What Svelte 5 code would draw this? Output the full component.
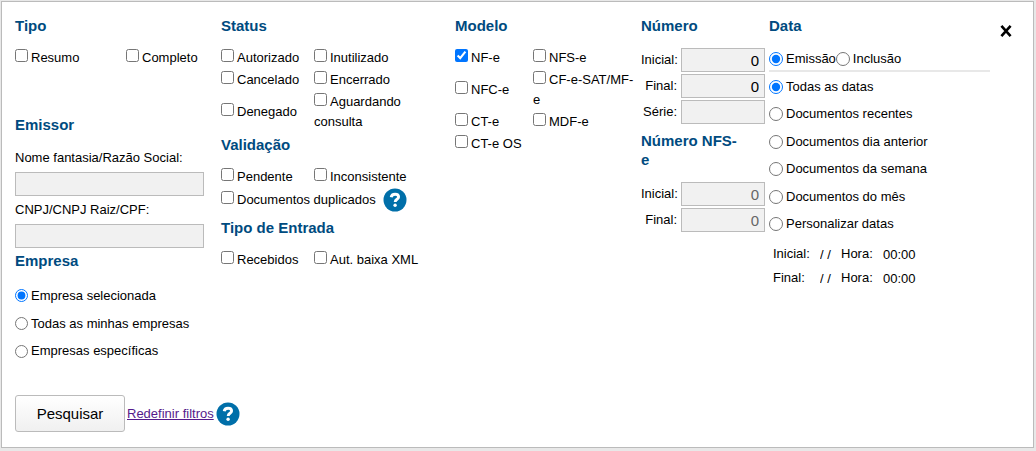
<script lang="ts">
	type Option = { id: string; label: string; checked?: boolean };

	const tipo: Option[] = [
		{ id: 'resumo', label: 'Resumo' },
		{ id: 'completo', label: 'Completo' }
	];

	const status: Option[] = [
		{ id: 'autorizado', label: 'Autorizado' },
		{ id: 'inutilizado', label: 'Inutilizado' },
		{ id: 'cancelado', label: 'Cancelado' },
		{ id: 'encerrado', label: 'Encerrado' },
		{ id: 'denegado', label: 'Denegado' },
		{ id: 'aguardando', label: 'Aguardando consulta' }
	];

	const validacao: Option[] = [
		{ id: 'pendente', label: 'Pendente' },
		{ id: 'inconsistente', label: 'Inconsistente' }
	];

	const entrada: Option[] = [
		{ id: 'recebidos', label: 'Recebidos' },
		{ id: 'baixa-xml', label: 'Aut. baixa XML' }
	];

	const modelo: Option[] = [
		{ id: 'nfe', label: 'NF-e', checked: true },
		{ id: 'nfse', label: 'NFS-e' },
		{ id: 'nfce', label: 'NFC-e' },
		{ id: 'cfe', label: 'CF-e-SAT/MF-e' },
		{ id: 'cte', label: 'CT-e' },
		{ id: 'mdfe', label: 'MDF-e' },
		{ id: 'cteos', label: 'CT-e OS' }
	];

	const empresas = ['Empresa selecionada', 'Todas as minhas empresas', 'Empresas específicas'];
	const tiposData = ['Emissão', 'Inclusão'];
	const periodos = [
		'Todas as datas',
		'Documentos recentes',
		'Documentos dia anterior',
		'Documentos da semana',
		'Documentos do mês',
		'Personalizar datas'
	];

	let empresa = $state(empresas[0]);
	let tipoData = $state(tiposData[0]);
	let periodo = $state(periodos[0]);
	let aberto = $state(true);
</script>

{#snippet checks(items: Option[])}
	{#each items as item (item.id)}
		<label class="check"><input type="checkbox" name={item.id} checked={item.checked} />{item.label}</label>
	{/each}
{/snippet}

{#snippet help()}
	<button type="button" class="help" aria-label="Ajuda">
		<svg viewBox="0 0 24 24" width="24" height="24">
			<circle cx="12" cy="12" r="11.5" fill="#006fa9" />
			<path d="M8.2 9.3C8.5 7 10 6.2 12.1 6.2c2.2 0 3.5 1.1 3.5 2.8 0 2.3-3.4 2.3-3.4 4.9" fill="none" stroke="#fff" stroke-width="2.9" />
			<circle cx="12.1" cy="17.2" r="1.7" fill="#fff" />
		</svg>
	</button>
{/snippet}

{#if aberto}
	<form class="panel" onsubmit={(e) => e.preventDefault()}>
		<div class="columns">
			<div>
				<h2>Tipo</h2>
				<div class="checks tipo">{@render checks(tipo)}</div>

				<h2>Emissor</h2>
				<div class="fields">
					<label for="nome">Nome fantasia/Razão Social:</label>
					<input id="nome" class="box" type="text" />
					<label for="cnpj">CNPJ/CNPJ Raiz/CPF:</label>
					<input id="cnpj" class="box" type="text" />
				</div>

				<h2>Empresa</h2>
				<div class="radios empresas">
					{#each empresas as item}
						<label><input type="radio" name="empresa" value={item} bind:group={empresa} />{item}</label>
					{/each}
				</div>
			</div>

			<div>
				<h2>Status</h2>
				<div class="checks status">{@render checks(status)}</div>

				<h2>Validação</h2>
				<div class="checks status">{@render checks(validacao)}</div>
				<div class="duplicados">
					<label class="check"><input type="checkbox" name="duplicados" />Documentos duplicados</label>
					{@render help()}
				</div>

				<h2>Tipo de Entrada</h2>
				<div class="checks status">{@render checks(entrada)}</div>
			</div>

			<div>
				<h2>Modelo</h2>
				<div class="checks modelo">{@render checks(modelo)}</div>
			</div>

			<div>
				<h2>Número</h2>
				<div class="numbers">
					<label for="num-inicial">Inicial:</label>
					<input id="num-inicial" class="box" type="text" value="0" />
					<label for="num-final">Final:</label>
					<input id="num-final" class="box" type="text" value="0" />
					<label for="serie">Série:</label>
					<input id="serie" class="box" type="text" />
				</div>

				<h2 class="nfse">Número NFS-e</h2>
				<div class="numbers">
					<label for="nfse-inicial">Inicial:</label>
					<input id="nfse-inicial" class="box" type="text" value="0" disabled />
					<label for="nfse-final">Final:</label>
					<input id="nfse-final" class="box" type="text" value="0" disabled />
				</div>
			</div>

			<div class="data">
				<h2>Data</h2>
				<div class="tipo-data">
					{#each tiposData as item}
						<label><input type="radio" name="tipo-data" value={item} bind:group={tipoData} />{item}</label>
					{/each}
				</div>
				<div class="radios periodos">
					{#each periodos as item}
						<label><input type="radio" name="periodo" value={item} bind:group={periodo} />{item}</label>
					{/each}
				</div>
				<div class="intervalo">
					<label for="data-inicial">Inicial:</label>
					<input id="data-inicial" type="text" value="/ /" />
					<label for="hora-inicial">Hora:</label>
					<input id="hora-inicial" type="text" value="00:00" />
					<label for="data-final">Final:</label>
					<input id="data-final" type="text" value="/ /" />
					<label for="hora-final">Hora:</label>
					<input id="hora-final" type="text" value="00:00" />
				</div>
			</div>

			<button type="button" class="close" aria-label="Fechar" onclick={() => (aberto = false)}>
				<svg viewBox="0 0 12 12" width="12" height="12">
					<path d="M1.4 0.9L10.6 11.1M10.6 0.9L1.4 11.1" fill="none" stroke="#000" stroke-width="2.6" />
				</svg>
			</button>
		</div>

		<div class="actions">
			<button type="submit" class="search">Pesquisar</button>
			<a href="#redefinir">Redefinir filtros</a>
			{@render help()}
		</div>
	</form>
{/if}

<style>
	:global(body) {
		margin: 0;
		background: #e8e8e8;
		color: #000;
		font: 13px/20px 'Liberation Sans', Arial, sans-serif;
	}

	.panel {
		margin: 1px 2px 3px 1px;
		padding: 14px 12px 15px 13px;
		background: #fff;
		border: 1px solid #bbb;
	}

	.columns {
		display: grid;
		grid-template-columns: 206fr 234fr 186fr 128fr 221fr 31px;
		align-items: start;
	}

	h2 {
		margin: 0 0 12px;
		color: #004b80;
		font-size: 15px;
		line-height: 19px;
	}

	input {
		box-sizing: border-box;
		margin: 0;
		font-family: inherit;
	}

	input[type='checkbox'] {
		width: 13px;
		height: 13px;
		margin: 0 3px 2px 0;
	}

	input[type='radio'] {
		flex: none;
		width: 13px;
		height: 13px;
		margin-right: 3px;
	}

	.checks {
		display: grid;
		align-items: center;
		margin-bottom: 2px;
	}

	.check {
		padding: 1px 0;
	}

	.tipo {
		grid-template-columns: 111px 1fr;
		margin-bottom: 46px;
	}

	.status {
		grid-template-columns: 93px 110px;
	}

	.modelo {
		grid-template-columns: 78px 104px;
	}

	.duplicados {
		display: flex;
		align-items: center;
		gap: 7px;
		height: 24px;
		margin: -2px 0 6px;
	}

	.box {
		width: 100%;
		height: 24px;
		padding: 0 5px;
		border: 1px solid #bbb;
		border-radius: 0;
		background: #f1f1f1;
		font-size: 15px;
	}

	.box:disabled {
		color: #666;
	}

	.fields {
		display: grid;
		gap: 4px;
		width: 189px;
		padding: 2px 0 3px;
	}

	.radios {
		display: flex;
		flex-direction: column;
	}

	.radios label {
		display: flex;
		flex: 1;
		align-items: center;
	}

	.empresas {
		height: 83px;
	}

	.numbers {
		display: grid;
		grid-template-columns: 36px 84px;
		align-items: center;
		column-gap: 4px;
		row-gap: 2px;
		padding: 1px 0 7px;
		text-align: right;
	}

	.numbers .box {
		text-align: right;
	}

	.nfse {
		padding-right: 24px;
	}

	.data input[type='radio'] {
		width: 14px;
		height: 14px;
	}

	.tipo-data {
		display: flex;
		height: 23px;
		border-bottom: 2px solid #e8e8e8;
	}

	.tipo-data label {
		display: flex;
		align-items: center;
	}

	.periodos {
		height: 165px;
		padding-top: 1px;
	}

	.intervalo {
		display: grid;
		grid-template-columns: 47px 21px 42px 40px;
		grid-auto-rows: 24px;
		align-items: center;
		padding: 4px;
	}

	.intervalo input {
		width: 100%;
		padding: 0;
		border: 0;
		background: none;
		font-size: 13px;
	}

	.close,
	.help {
		padding: 0;
		border: 0;
		background: none;
		cursor: pointer;
	}

	.close {
		padding-top: 9px;
	}

	.close svg,
	.help svg {
		display: block;
		margin: 0 auto;
	}

	.actions {
		display: flex;
		align-items: center;
		gap: 2px;
		margin-top: 30px;
	}

	.actions a {
		color: #551a8b;
	}

	.search {
		width: 110px;
		height: 37px;
		border: 1px solid #bbb;
		border-radius: 3px;
		background: linear-gradient(#fff, #f0f0f0);
		color: #000;
		font-family: inherit;
		font-size: 15px;
		cursor: pointer;
	}
</style>
